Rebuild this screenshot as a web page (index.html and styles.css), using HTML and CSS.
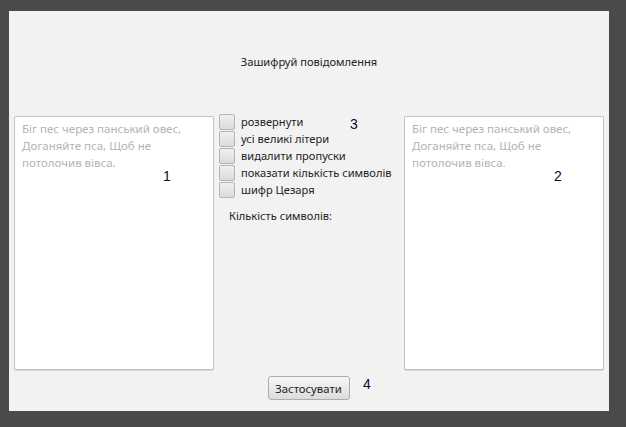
FILE: index.html
```html
<!DOCTYPE html>
<html lang="uk">
<head>
<meta charset="utf-8">
<title>Шифр</title>
<link rel="stylesheet" href="styles.css">
</head>
<body>
<div class="panel">
  <div class="title">Зашифруй повідомлення</div>
  <div class="main">
    <div class="area">
      <span class="ph">Біг пес через панський овес,</span>
      <span class="ph">Доганяйте пса, Щоб не</span>
      <span class="ph">потолочив вівса.</span>
    </div>
    <div class="middle">
      <label class="check"><span class="box"></span>розвернути</label>
      <label class="check"><span class="box"></span>усі великі літери</label>
      <label class="check"><span class="box"></span>видалити пропуски</label>
      <label class="check"><span class="box"></span>показати кількість символів</label>
      <label class="check"><span class="box"></span>шифр Цезаря</label>
      <div class="count">Кількість символів:</div>
    </div>
    <div class="area">
      <span class="ph">Біг пес через панський овес,</span>
      <span class="ph">Доганяйте пса, Щоб не</span>
      <span class="ph">потолочив вівса.</span>
    </div>
  </div>
  <div class="bottom">
    <button class="btn">Застосувати</button>
  </div>
  <span class="num n1">1</span>
  <span class="num n2">2</span>
  <span class="num n3">3</span>
  <span class="num n4">4</span>
</div>
</body>
</html>
```
FILE: styles.css
```css
html, body {
  margin: 0;
  padding: 0;
}
body {
  width: 626px;
  height: 427px;
  background-color: #4a4a4a;
  background-image: repeating-conic-gradient(#4e4e4e 0 25%, #464646 0 50%);
  background-size: 2px 2px;
  overflow: hidden;
  padding: 11px 0 0 9px;
  box-sizing: border-box;
  font-family: "Noto Sans", "Open Sans", sans-serif;
  font-size: 11px;
  color: #222;
}
.panel {
  position: relative;
  width: 600px;
  height: 400px;
  background: #f2f2f2;
  display: flex;
  flex-direction: column;
}
.title {
  height: 105px;
  padding-top: 43px;
  box-sizing: border-box;
  text-align: center;
  line-height: 16px;
  font-size: 11.1px;
  color: #222;
}
.main {
  display: flex;
  padding-left: 5px;
  height: 254px;
}
.area {
  width: 200px;
  height: 254px;
  box-sizing: border-box;
  background: #fff;
  border: 1px solid #c3c3c3;
  border-radius: 2px;
  box-shadow: 0 1px 0 #d6d6d6;
  padding: 3px 7px;
  font-size: 11.5px;
  line-height: 17px;
  display: flex;
  flex-direction: column;
  align-items: flex-start;
}
.ph {
  color: #b3b3b3;
}
.middle {
  width: 190px;
  box-sizing: border-box;
  padding-left: 5px;
  margin-top: -3px;
  display: flex;
  flex-direction: column;
}
.check {
  display: flex;
  align-items: center;
  height: 17px;
  line-height: 17px;
  font-size: 11.1px;
  color: #222;
}
.box {
  width: 14px;
  height: 14px;
  margin-right: 6px;
  border: 1px solid #b5b5b5;
  border-radius: 2px;
  background: linear-gradient(#f0f0f0, #dadada);
  flex: none;
}
.count {
  margin-top: 9px;
  padding-left: 10px;
  line-height: 17px;
  font-size: 11.1px;
}
.bottom {
  display: flex;
  justify-content: center;
  padding-top: 6px;
}
.btn {
  width: 82px;
  height: 24px;
  font-family: "Noto Sans", "Open Sans", sans-serif;
  font-size: 11.3px;
  color: #222;
  border: 1px solid #adadad;
  border-radius: 3px;
  background: linear-gradient(#f6f6f6, #dcdcdc);
  padding: 0;
  margin-left: -1px;
}
.num {
  position: absolute;
  font-family: "Liberation Sans", sans-serif;
  font-size: 14px;
  color: #0a0a2a;
  line-height: 14px;
}
.n1 { left: 154px; top: 158px; }
.n2 { left: 545px; top: 158px; }
.n3 { left: 341px; top: 106px; }
.n4 { left: 354px; top: 366px; }
```
